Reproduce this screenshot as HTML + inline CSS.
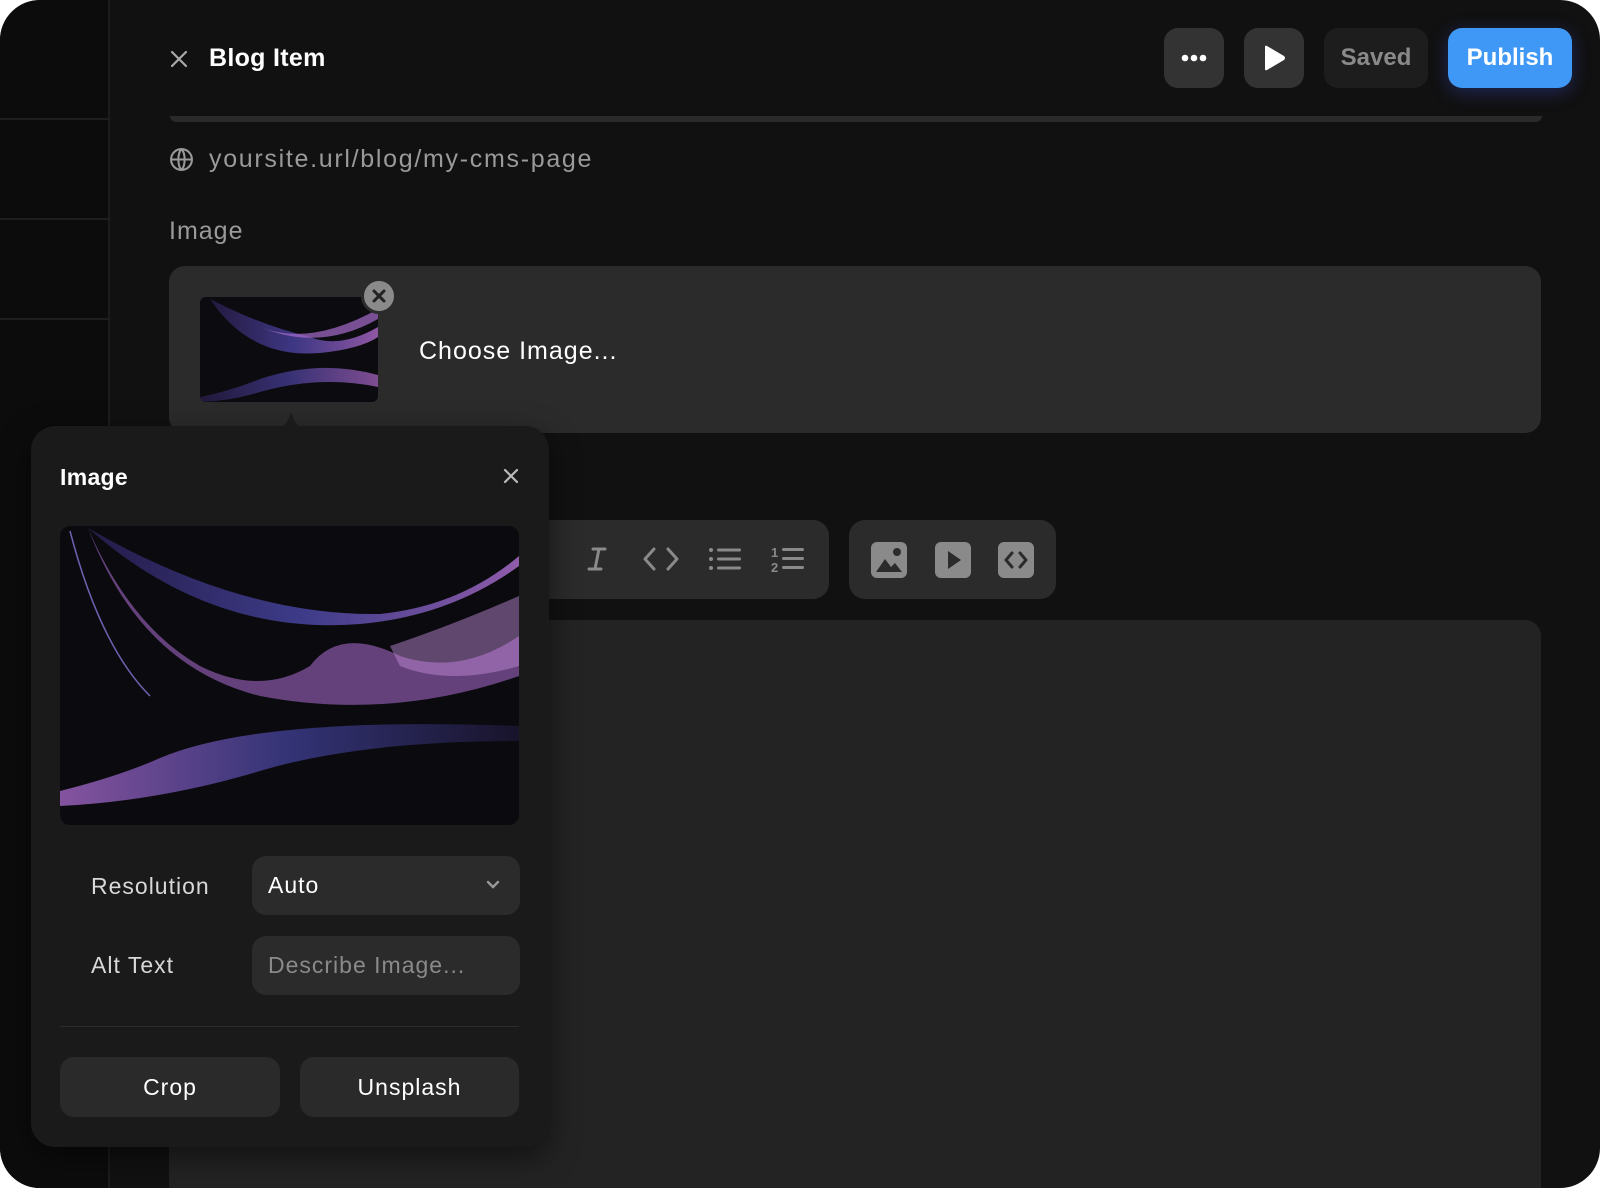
<!DOCTYPE html>
<html><head><meta charset="utf-8"><style>
*{box-sizing:border-box;margin:0;padding:0}
body{width:1600px;height:1188px;background:#fff;font-family:"Liberation Sans",sans-serif;overflow:hidden;position:relative}
.frame{position:absolute;left:0;top:0;width:1600px;height:1188px;background:#111;border-radius:40px;overflow:hidden}
.side{position:absolute;left:0;top:0;width:110px;height:1188px;background:#0c0c0c;border-right:2px solid #1c1c1c}
.hl{position:absolute;left:0;width:110px;height:2px;background:#1e1e1e}
.abs{position:absolute}
.btn{position:absolute;top:28px;height:60px;border-radius:14px;background:#333;display:flex;align-items:center;justify-content:center}
.txt{position:absolute;white-space:nowrap;letter-spacing:1px}
.pop{position:absolute;left:31px;top:426px;width:518px;height:721px;background:#1a1a1a;border-radius:24px;box-shadow:0 10px 30px rgba(0,0,0,.5)}
.field{position:absolute;background:#2b2b2b;border-radius:14px;font-size:23px;display:flex;align-items:center;padding-left:16px;letter-spacing:1px}
.pb{position:absolute;top:631px;height:60px;background:#2a2a2a;border-radius:14px;display:flex;align-items:center;justify-content:center;color:#fff;font-size:23px;letter-spacing:1px}
</style></head><body>
<div class="frame">
  <div class="side"></div>
  <div class="hl" style="top:118px"></div>
  <div class="hl" style="top:218px"></div>
  <div class="hl" style="top:318px"></div>

  <svg class="abs" style="left:170px;top:50px" width="18" height="18" viewBox="0 0 18 18"><path d="M2 2L16 16M16 2L2 16" stroke="#aaa" stroke-width="2.2" stroke-linecap="round"/></svg>
  <div class="txt" style="left:209px;top:44px;font-size:25px;font-weight:bold;color:#fff;letter-spacing:0.3px">Blog Item</div>

  <div class="btn" style="left:1164px;width:60px"><svg width="26" height="8"><circle cx="4" cy="4" r="3.3" fill="#fff"/><circle cx="13" cy="4" r="3.3" fill="#fff"/><circle cx="22" cy="4" r="3.3" fill="#fff"/></svg></div>
  <div class="btn" style="left:1244px;width:60px"><svg width="26" height="28" viewBox="0 0 26 28"><path d="M4 3Q4 1 6 2L23 12Q25 14 23 16L6 26Q4 27 4 25Z" fill="#fff"/></svg></div>
  <div class="btn" style="left:1324px;width:104px;background:#1d1d1d;color:#8a8a8a;font-size:24px;font-weight:bold">Saved</div>
  <div class="btn" style="left:1448px;width:124px;background:#3f98f5;color:#fff;font-size:24px;font-weight:bold;box-shadow:0 4px 18px rgba(60,80,220,.35)">Publish</div>

  <div class="abs" style="left:170px;top:116px;width:1372px;height:6px;background:#2a2a2a;border-radius:0 0 8px 8px"></div>

  <svg class="abs" style="left:169px;top:147px" width="25" height="25" viewBox="0 0 24 24"><g fill="none" stroke="#999" stroke-width="2"><circle cx="12" cy="12" r="10"/><path d="M2 12H22M12 2C8 6 8 18 12 22M12 2C16 6 16 18 12 22"/></g></svg>
  <div class="txt" style="left:209px;top:145px;font-size:25px;color:#9a9a9a;letter-spacing:1.7px">yoursite.url/blog/my-cms-page</div>
  <div class="txt" style="left:169px;top:217px;font-size:25px;color:#9a9a9a">Image</div>

  <div class="abs" style="left:169px;top:266px;width:1372px;height:167px;background:#2b2b2b;border-radius:16px"></div>
  <svg class="abs" style="left:200px;top:297px;border-radius:6px" width="178" height="105" viewBox="0 0 178 105">
    <defs><linearGradient id="g1" x1="0" x2="1"><stop offset="0" stop-color="#2a1d4a"/><stop offset=".5" stop-color="#4a42a0"/><stop offset="1" stop-color="#b06ac8"/></linearGradient></defs>
    <rect width="178" height="105" fill="#0b0b10"/>
    <path d="M10 2Q50 62 120 56Q160 52 178 40V30Q140 52 110 40Q60 28 10 2Z" fill="url(#g1)" opacity=".8"/>
    <path d="M0 100Q30 94 60 82Q120 62 178 78V90Q120 78 60 95Q30 104 0 105Z" fill="url(#g1)" opacity=".7"/>
    <path d="M60 30Q110 50 178 12V22Q120 55 60 30Z" fill="#a86ccc" opacity=".7"/>
  </svg>
  <div class="abs" style="left:361px;top:278px;width:36px;height:36px;border-radius:50%;background:#8a8a8a;border:3px solid #2b2b2b"></div>
  <svg class="abs" style="left:372px;top:289px" width="14" height="14"><path d="M2 2L12 12M12 2L2 12" stroke="#222" stroke-width="3" stroke-linecap="round"/></svg>
  <div class="txt" style="left:419px;top:337px;font-size:25px;color:#fff">Choose Image...</div>

  <!-- toolbar -->
  <div class="abs" style="left:500px;top:520px;width:329px;height:79px;background:#2b2b2b;border-radius:16px"></div>
  <div class="abs" style="left:849px;top:520px;width:207px;height:79px;background:#2b2b2b;border-radius:16px"></div>
  <svg class="abs" style="left:584px;top:546px" width="26" height="26" viewBox="0 0 26 26"><path d="M9 3H21M5 23H17M15 3L11 23" stroke="#8a8a8a" stroke-width="3" stroke-linecap="round"/></svg>
  <svg class="abs" style="left:642px;top:546px" width="38" height="26" viewBox="0 0 38 26"><path d="M12 3L3 13L12 23M26 3L35 13L26 23" stroke="#8a8a8a" stroke-width="3" fill="none" stroke-linecap="round" stroke-linejoin="round"/></svg>
  <svg class="abs" style="left:708px;top:546px" width="34" height="26" viewBox="0 0 34 26"><g fill="#8a8a8a"><circle cx="3" cy="4" r="2"/><circle cx="3" cy="13" r="2"/><circle cx="3" cy="22" r="2"/><rect x="9" y="2.5" width="24" height="3" rx="1.5"/><rect x="9" y="11.5" width="24" height="3" rx="1.5"/><rect x="9" y="20.5" width="24" height="3" rx="1.5"/></g></svg>
  <svg class="abs" style="left:770px;top:544px" width="36" height="30" viewBox="0 0 36 30"><g fill="#8a8a8a"><rect x="12" y="4" width="22" height="3" rx="1.5"/><rect x="12" y="13" width="22" height="3" rx="1.5"/><rect x="12" y="22" width="22" height="3" rx="1.5"/></g><text x="1" y="13" font-size="13" font-weight="bold" fill="#8a8a8a" font-family="Liberation Sans">1</text><text x="1" y="28" font-size="13" font-weight="bold" fill="#8a8a8a" font-family="Liberation Sans">2</text></svg>
  <svg class="abs" style="left:871px;top:542px" width="36" height="36" viewBox="0 0 36 36"><rect width="36" height="36" rx="6" fill="#8a8a8a"/><path d="M5 30L14 17L20 25L24 21L31 30Z" fill="#2b2b2b"/><circle cx="26" cy="10" r="4" fill="#2b2b2b"/></svg>
  <svg class="abs" style="left:935px;top:542px" width="36" height="36" viewBox="0 0 36 36"><rect width="36" height="36" rx="6" fill="#8a8a8a"/><path d="M13 9L26 18L13 27Z" fill="#2b2b2b"/></svg>
  <svg class="abs" style="left:998px;top:542px" width="36" height="36" viewBox="0 0 36 36"><rect width="36" height="36" rx="6" fill="#8a8a8a"/><path d="M14 11L8 18L14 25M22 11L28 18L22 25" stroke="#2b2b2b" stroke-width="3" fill="none" stroke-linecap="round" stroke-linejoin="round"/></svg>

  <div class="abs" style="left:169px;top:620px;width:1372px;height:600px;background:#232323;border-radius:16px"></div>

  <!-- popover -->
  <div class="pop">
    <svg class="abs" style="left:248px;top:-14px" width="24" height="16" viewBox="0 0 24 16"><path d="M0 16Q8 14 12 0Q16 14 24 16Z" fill="#1a1a1a"/></svg>
    <div class="txt" style="left:29px;top:38px;font-size:23px;font-weight:bold;color:#fff;letter-spacing:0.3px">Image</div>
    <svg class="abs" style="left:472px;top:42px" width="16" height="16"><path d="M2 2L14 14M14 2L2 14" stroke="#bbb" stroke-width="2.2" stroke-linecap="round"/></svg>
    <svg class="abs" style="left:29px;top:100px;border-radius:10px" width="459" height="299" viewBox="0 0 459 299">
      <defs>
        <linearGradient id="g2" x1="0" x2="1"><stop offset="0" stop-color="#2a1f55"/><stop offset=".5" stop-color="#4a48a8"/><stop offset="1" stop-color="#b070d0"/></linearGradient>
        <linearGradient id="g3" x1="0" x2="1"><stop offset="0" stop-color="#9a60b8"/><stop offset=".5" stop-color="#3a3a88"/><stop offset="1" stop-color="#1a1530"/></linearGradient>
      </defs>
      <rect width="459" height="299" fill="#0b0b0f"/>
      <path d="M28 2Q150 110 300 98Q390 90 459 40V30Q400 80 320 88Q180 90 28 2Z" fill="url(#g2)" opacity=".8"/>
      <path d="M28 2Q80 140 200 170Q330 195 459 150V110Q400 150 340 130Q280 100 250 140Q200 170 140 140Q70 100 28 2Z" fill="#8a58a8" opacity=".7"/>
      <path d="M0 265Q60 250 100 232Q200 190 459 200V215Q300 215 200 245Q100 275 0 280Z" fill="url(#g3)" opacity=".85"/>
      <path d="M330 120Q390 100 459 70V140Q390 160 340 140Z" fill="#c890e0" opacity=".45"/>
      <path d="M10 5Q40 120 90 170" stroke="#7060b0" stroke-width="1.5" fill="none"/>
    </svg>
    <div class="txt" style="left:60px;top:447px;font-size:23px;color:#d8d8d8">Resolution</div>
    <div class="field" style="left:221px;top:430px;width:268px;height:59px;color:#fff">Auto
      <svg class="abs" style="left:234px;top:24px" width="14" height="10"><path d="M2 2L7 7L12 2" stroke="#999" stroke-width="2.4" fill="none" stroke-linecap="round"/></svg></div>
    <div class="txt" style="left:60px;top:526px;font-size:23px;color:#d8d8d8">Alt Text</div>
    <div class="field" style="left:221px;top:510px;width:268px;height:59px;color:#8a8a8a">Describe Image...</div>
    <div class="abs" style="left:29px;top:600px;width:459px;height:1px;background:#2c2c2c"></div>
    <div class="pb" style="left:29px;width:220px">Crop</div>
    <div class="pb" style="left:269px;width:219px">Unsplash</div>
  </div>
</div>
</body></html>
